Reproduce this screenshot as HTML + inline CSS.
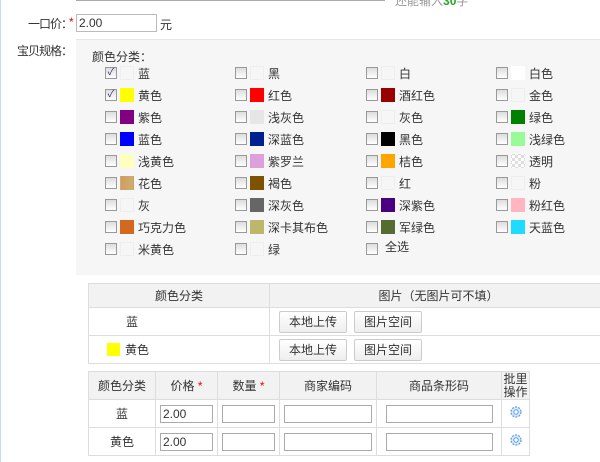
<!DOCTYPE html><html><head><meta charset="utf-8"><style>
*{margin:0;padding:0;box-sizing:border-box}
body{width:600px;height:462px;position:relative;overflow:hidden;background:#fff;font:12px "Liberation Sans","Noto Sans CJK SC",sans-serif;color:#333}
.a{position:absolute}
.cb{position:absolute;width:12px;height:12px;border:1px solid #999;background:linear-gradient(#ddd,#fff);font-size:10px;line-height:10px;color:#336;text-align:center}
.sw{position:absolute;width:14px;height:14px;border:1px solid #eee;background:#f6f6f6}
.lb{position:absolute;line-height:14px}
table{position:absolute;border-collapse:collapse}
td{border:1px solid #ddd;text-align:center}
.btn{display:inline-block;border:1px solid #ccc;background:linear-gradient(#fff,#eee);height:22px;line-height:20px;padding:0 9px;border-radius:2px;margin-right:7px}
.in{display:inline-block;border:1px solid #aaa;height:18px;vertical-align:middle;text-align:left;padding-left:2px;line-height:16px}
.r{color:#e00}
</style></head><body>
<div class="a" style="left:0;top:0;width:1px;height:462px;background:#c5dcf7"></div>
<div class="a" style="left:76px;top:0;width:309px;height:1px;background:#aaa"></div>
<div class="a" style="left:395px;top:-8px;color:#999">还能输入<span style="color:#2a2;font-weight:bold">30</span>字</div>
<div class="a" style="left:0;width:72px;text-align:right;top:15px;letter-spacing:-1px">一口价：</div>
<div class="a r" style="left:69px;top:15px">*</div>
<div class="a in" style="left:76px;top:14px;width:81px;height:18px;border-color:#bbb">2.00</div>
<div class="a" style="left:160px;top:16px">元</div>
<div class="a" style="left:0;width:72px;text-align:right;top:42px;letter-spacing:-1px">宝贝规格：</div>
<div class="a" style="left:76px;top:39px;width:524px;height:236px;background:#f6f6f6;border-top:1px solid #e6e6e6"></div>
<div class="a" style="left:92px;top:48px">颜色分类：</div>
<div id="g"></div>
<table style="left:88px;top:283px;width:520px">
<tr style="height:24px;background:#f2f2f2"><td style="width:181px">颜色分类</td><td>图片（无图片可不填）</td></tr>
<tr style="height:28px"><td style="text-align:left;padding-left:37px">蓝</td><td style="text-align:left;padding-left:9px"><span class="btn">本地上传</span><span class="btn">图片空间</span></td></tr>
<tr style="height:28px"><td style="text-align:left;padding-left:18px"><span style="display:inline-block;width:13px;height:13px;background:#ff0;vertical-align:-2px;margin-right:5px"></span>黄色</td><td style="text-align:left;padding-left:9px"><span class="btn">本地上传</span><span class="btn">图片空间</span></td></tr>
</table>
<table style="left:88px;top:371px;width:442px">
<tr style="height:28px;background:#f2f2f2"><td style="width:67px">颜色分类</td><td style="width:62px">价格 <span class="r">*</span></td><td style="width:62px">数量 <span class="r">*</span></td><td style="width:97px">商家编码</td><td style="width:125px">商品条形码</td><td style="line-height:13px">批里<br>操作</td></tr>
<tr style="height:28px"><td>蓝</td><td><span class="in" style="width:53px">2.00</span></td><td><span class="in" style="width:53px"></span></td><td><span class="in" style="width:88px"></span></td><td><span class="in" style="width:107px"></span></td><td><svg width="14" height="14" viewBox="0 0 14 14"><circle cx="7" cy="7" r="5" fill="#d8eafc" stroke="#5a9be0" stroke-width="1.2" stroke-dasharray="2 1.2"/><circle cx="7" cy="7" r="2.2" fill="#fff" stroke="#5a9be0"/></svg></td></tr>
<tr style="height:28px"><td>黄色</td><td><span class="in" style="width:53px">2.00</span></td><td><span class="in" style="width:53px"></span></td><td><span class="in" style="width:88px"></span></td><td><span class="in" style="width:107px"></span></td><td><svg width="14" height="14" viewBox="0 0 14 14"><circle cx="7" cy="7" r="5" fill="#d8eafc" stroke="#5a9be0" stroke-width="1.2" stroke-dasharray="2 1.2"/><circle cx="7" cy="7" r="2.2" fill="#fff" stroke="#5a9be0"/></svg></td></tr>
</table>
<script>
var d=[["蓝",0,1],["黑",0],["白",0],["白色","#fff"],["黄色","#ff0",1],["红色","#f00"],["酒红色","#900"],["金色",0],["紫色","#800080"],["浅灰色","#e6e6e6"],["灰色",0],["绿色","#008000"],["蓝色","#00f"],["深蓝色","#00208f"],["黑色","#000"],["浅绿色","#98fb98"],["浅黄色","#ffffc0"],["紫罗兰","#dda0dd"],["桔色","#ffa500"],["透明","repeating-conic-gradient(#ddd 0 25%,#fff 0 50%) 0 0/6px 6px"],["花色","linear-gradient(90deg,#d89a60,#c8b070)"],["褐色","#7f5200"],["红",0],["粉",0],["灰",0],["深灰色","#666"],["深紫色","#4b0080"],["粉红色","#ffb6c1"],["巧克力色","#d2691e"],["深卡其布色","#bdb76b"],["军绿色","#556b2f"],["天蓝色","#1edcff"],["米黄色",0],["绿",0],["全选",-1]];
var h="",xs=[105,235,366,496];
d.forEach(function(c,i){var x=xs[i%4],y=67+Math.floor(i/4)*22;
h+='<div class="cb" style="left:'+x+'px;top:'+y+'px">'+(c[2]?'✓':'')+'</div>';
if(c[1]!==-1){h+='<div class="sw" style="left:'+(x+15)+'px;top:'+(y-1)+'px;'+(c[1]?'background:'+c[1]+';border-color:transparent':'')+'"></div>';
h+='<div class="lb" style="left:'+(x+33)+'px;top:'+y+'px">'+c[0]+'</div>';}
else h+='<div class="lb" style="left:'+(x+19)+'px;top:'+(y-3)+'px">'+c[0]+'</div>';});
document.getElementById("g").innerHTML=h;
</script>
</body></html>
